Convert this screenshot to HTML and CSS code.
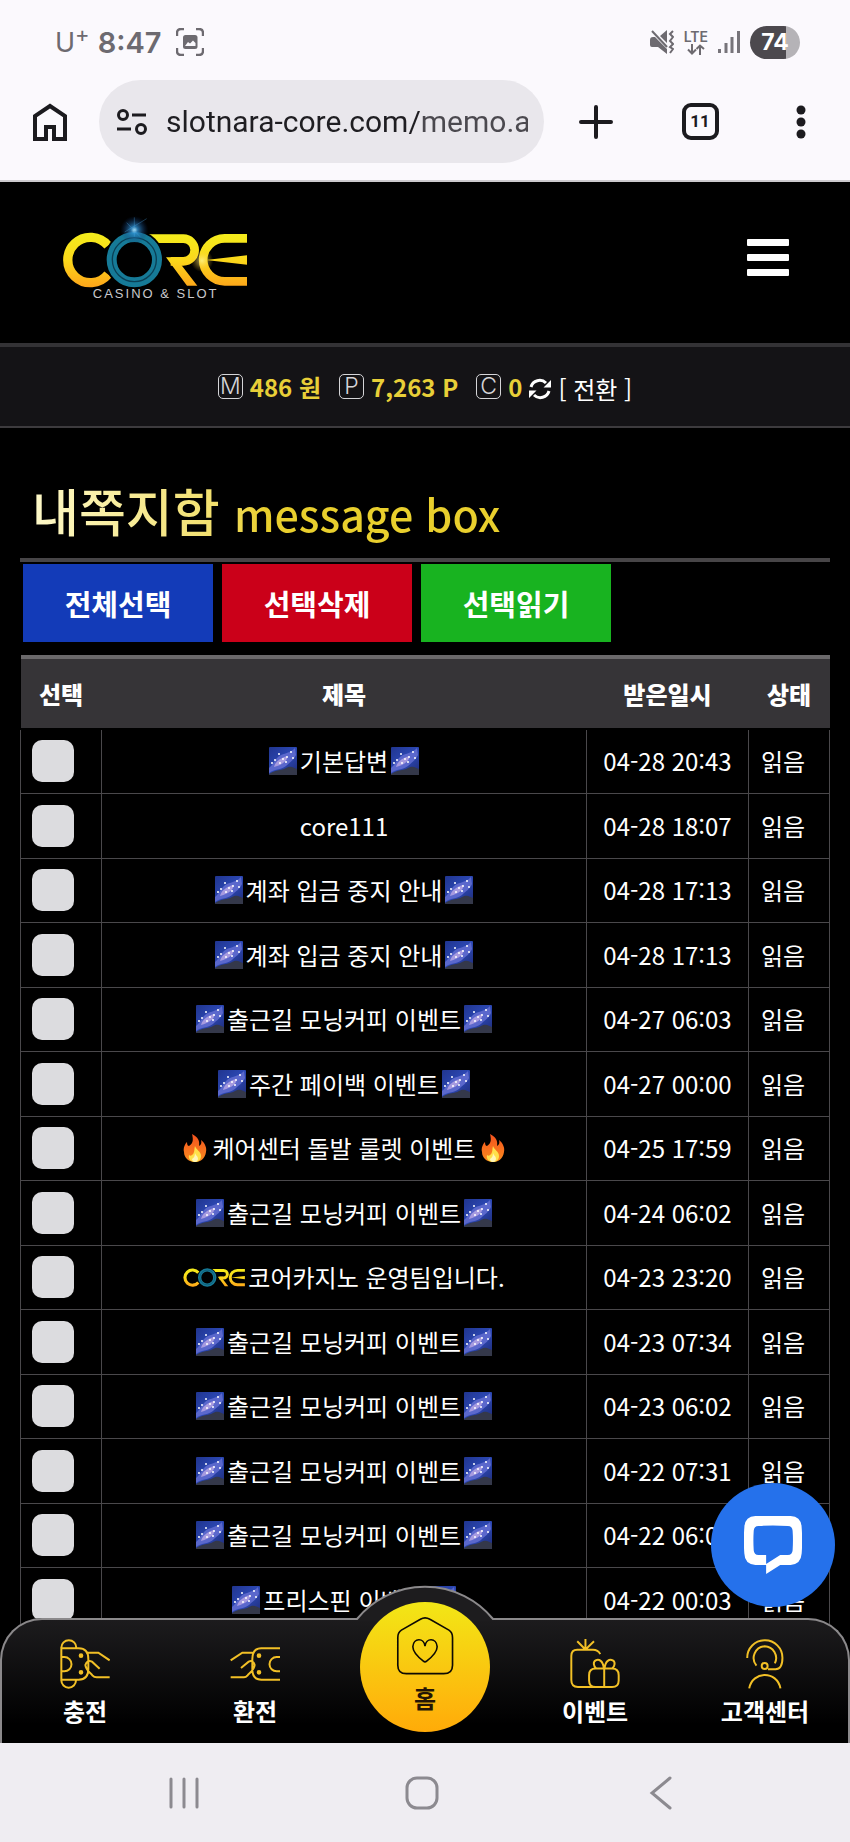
FILE: index.html
```html
<!DOCTYPE html>
<html lang="ko">
<head>
<meta charset="utf-8">
<meta name="viewport" content="width=device-width, initial-scale=1">
<title>내쪽지함</title>
<link rel="stylesheet" href="styles.css">
</head>
<body>
<svg class="defs" aria-hidden="true">
  <defs>
    <linearGradient id="gold" x1="0" y1="150" x2="0" y2="318" gradientUnits="userSpaceOnUse">
      <stop offset="0" stop-color="#f3ee1c"/><stop offset=".5" stop-color="#fbd91a"/><stop offset="1" stop-color="#fda51a"/>
    </linearGradient>
    <radialGradient id="flare"><stop offset="0" stop-color="#b9ecff"/><stop offset=".25" stop-color="#2f8fd0" stop-opacity=".8"/><stop offset="1" stop-color="#0a2a66" stop-opacity="0"/></radialGradient>
    <radialGradient id="glow"><stop offset="0" stop-color="#fff7a0"/><stop offset="1" stop-color="#fbc21a" stop-opacity="0"/></radialGradient>
    <linearGradient id="night" x1="0" y1="0" x2="1" y2="1"><stop offset="0" stop-color="#20358f"/><stop offset=".5" stop-color="#2c48b4"/><stop offset="1" stop-color="#1f2c78"/></linearGradient>
    <linearGradient id="fire" x1="0" y1="0" x2="0" y2="1"><stop offset="0" stop-color="#f4511e"/><stop offset="1" stop-color="#fb8c1e"/></linearGradient>
  </defs>
  <symbol id="core-mark" viewBox="186 150 556 170">
    <path d="M324 193A68 68 0 1 0 324 279" fill="none" stroke="url(#gold)" stroke-width="28"/>
    <path d="M446 172H550A33 33 0 0 1 550 240H512" fill="none" stroke="url(#gold)" stroke-width="26"/>
    <path d="M498 228H545L540 246L592 313H561Z" fill="url(#gold)"/>
    <path d="M741 171H674A64 64 0 0 0 674 300H741" fill="none" stroke="url(#gold)" stroke-width="26"/>
    <path d="M618 236L741 222V250Z" fill="url(#gold)"/>
    <circle cx="403" cy="235" r="89" fill="#000"/>
    <circle cx="403" cy="235" r="68" fill="none" stroke="#167a97" stroke-width="30"/>
    <circle cx="403" cy="235" r="66" fill="none" stroke="#0a3f55" stroke-width="4"/>
  </symbol>
  <symbol id="galaxy" viewBox="0 0 28 28">
    <rect width="28" height="28" rx="1" fill="url(#night)"/>
    <path d="M0 21C5 17 6 11 12 8C17 6 23 5 26 1L27 8C25 13 21 15 17 19C12 23 5 22 0 26Z" fill="#5b68cc"/>
    <path d="M5 20C6 15 11 11 18 9C20 12 14 18 5 20Z" fill="#a79be0"/>
    <path d="M0 27C7 22 12 24 17 21C22 18 25 21 28 22V28H0Z" fill="#34384a"/>
    <g fill="#fff"><circle cx="10" cy="7" r="1"/><circle cx="14" cy="12" r="1"/><circle cx="22" cy="5" r="1"/><circle cx="17" cy="15" r="1"/><circle cx="6" cy="13" r="1"/><circle cx="11" cy="16" r="1"/><circle cx="24" cy="11" r="1"/><circle cx="3" cy="16" r="1"/><circle cx="18" cy="10" r="1"/></g>
  </symbol>
  <symbol id="flame" viewBox="0 0 24 28">
    <path d="M9 0C15 3 17 7 16 12C18 11 19 9 18 6C22 9 24 14 23 18C22 25 17 28 12 28C6 28 1 24 1 18C0 14 2 10 4 8C4 11 5 12 6 12C11 9 10 4 9 0Z" fill="url(#fire)"/>
    <path d="M12 12C13 16 18 17 18 22C18 26 15 28 12 28C8 28 5 25 6 21C7 22 8 22 9 21C12 19 11 15 12 12Z" fill="#ffe04a"/>
    <path d="M12 19C13 22 15 22 15 25C15 27 13 28 12 28C10 28 9 26 9 25C11 24 12 22 12 19Z" fill="#fff6b8"/>
  </symbol>
</svg>

<div class="screen">
  <div class="status">
    <span class="carrier">U<sup>+</sup></span>
    <span class="clock">8:47</span>
    <svg class="shot" viewBox="0 0 28 28" aria-hidden="true"><path d="M1 8V5Q1 1 5 1H8M20 1h3q4 0 4 4v3M27 20v3q0 4-4 4h-3M8 27H5Q1 27 1 23V20" fill="none" stroke="#6d6a70" stroke-width="2.4"/><rect x="7" y="7" width="14.500" height="14" rx="2.500" fill="#6d6a70"/><path d="M9 18L12 14L14 15.500L17 12.500L19.500 15V18Z" fill="#fbf9fd"/></svg>
    <div class="status-right">
      <svg class="mute" viewBox="0 0 24 24" aria-hidden="true"><path d="M0 10Q0 7 3 7H5L17 19V24L8 17H2Q0 17 0 15ZM10 6L17 0V13Z" fill="#6d6a70"/><path d="M2 1L17 17" stroke="#6d6a70" stroke-width="2"/><path d="M23 1l-3 3 3 3-3 4 3 3-3 3 3 2-3 4" fill="none" stroke="#6d6a70" stroke-width="2"/></svg>
      <span class="lte">LTE<svg viewBox="0 0 18 11" aria-hidden="true"><path d="M5 0V9M1 5.500L5 9.500L9 5.500M13 11V2M9.500 5L13 1.500L17 5" fill="none" stroke="#6d6a70" stroke-width="2"/></svg></span>
      <svg class="bars" viewBox="0 0 22 24" aria-hidden="true"><path d="M1.500 19V23M8 13V23M14 7V23M20.500 1V23" stroke="#77747a" stroke-width="3"/></svg>
      <span class="battery">74</span>
    </div>
  </div>

  <div class="browser">
    <button class="tool home" aria-label="홈페이지"><svg width="36" height="38" viewBox="0 0 36 38"><path d="M3 36V13L18 3L33 13V36H22V24H14V36Z" fill="none" stroke="#1c1b1f" stroke-width="4"/></svg></button>
    <div class="address">
      <svg width="32" height="28" viewBox="0 0 32 28" aria-hidden="true"><g fill="none" stroke="#1c1b1f" stroke-width="3"><circle cx="7" cy="7" r="4.500"/><path d="M16 7H30M1 21H15"/><circle cx="25" cy="21" r="4.500"/></g></svg>
      <input class="url" type="text" aria-label="주소" value="slotnara-core.com/memo.asp">
    </div>
    <button class="tool" aria-label="새 탭"><svg width="34" height="34" viewBox="0 0 34 34"><path d="M17 2V32M2 17H32" stroke="#1c1b1f" stroke-width="4" stroke-linecap="round"/></svg></button>
    <button class="tool" aria-label="탭 11개"><span class="tabs">11</span></button>
    <button class="tool more" aria-label="더보기"><svg width="10" height="34" viewBox="0 0 10 34" fill="#1c1b1f"><circle cx="5" cy="5" r="4.500"/><circle cx="5" cy="17" r="4.500"/><circle cx="5" cy="29" r="4.500"/></svg></button>
  </div>

  <div class="site">
    <header class="top">
      <a class="logo" href="#" aria-label="CORE">
        <svg width="190" height="88" viewBox="180 98 570 264">
          <use href="#core-mark" x="186" y="150" width="556" height="170"/>
          <circle cx="403" cy="146" r="42" fill="url(#flare)"/>
          <path d="M403 108V166M374 152L440 112M380 124L420 166" stroke="#4aa8e6" stroke-width="2" opacity=".5"/>
          <circle cx="606" cy="238" r="34" fill="url(#glow)" opacity=".7"/>
          <text class="tagline" x="467" y="350" text-anchor="middle">CASINO &amp; SLOT</text>
        </svg>
      </a>
      <button class="menu" aria-label="메뉴"><span></span><span></span><span></span></button>
    </header>

    <div class="wallet">
      <div class="coin"><span class="badge">M</span><b>486 원</b></div>
      <div class="coin"><span class="badge">P</span><b>7,263 P</b></div>
      <div class="coin"><span class="badge">C</span><b>0</b>
        <button class="swap"><svg width="22" height="22" viewBox="0 0 22 22" aria-hidden="true"><path d="M2 9A9 9 0 0 1 17 5M20 13A9 9 0 0 1 5 17" fill="none" stroke="#fff" stroke-width="3"/><path d="M22 2V9.500H14.500ZM0 20V12.500H7.500Z" fill="#fff"/></svg>[ 전환 ]</button>
      </div>
    </div>

    <main class="box">
      <h1>내쪽지함 <small>message box</small></h1>
      <div class="actions">
        <button class="act blue">전체선택</button>
        <button class="act red">선택삭제</button>
        <button class="act green">선택읽기</button>
      </div>
      <table>
        <colgroup><col class="c-pick"><col><col class="c-date"><col class="c-state"></colgroup>
        <thead><tr><th>선택</th><th>제목</th><th>받은일시</th><th>상태</th></tr></thead>
        <tbody>
          <tr><td><input type="checkbox" aria-label="기본답변"></td><td><a href="#"><svg class="emo"><use href="#galaxy"/></svg>기본답변<svg class="emo"><use href="#galaxy"/></svg></a></td><td>04-28 20:43</td><td>읽음</td></tr>
          <tr><td><input type="checkbox" aria-label="core111"></td><td><a href="#">core111</a></td><td>04-28 18:07</td><td>읽음</td></tr>
          <tr><td><input type="checkbox" aria-label="계좌 입금 중지 안내"></td><td><a href="#"><svg class="emo"><use href="#galaxy"/></svg>계좌 입금 중지 안내<svg class="emo"><use href="#galaxy"/></svg></a></td><td>04-28 17:13</td><td>읽음</td></tr>
          <tr><td><input type="checkbox" aria-label="계좌 입금 중지 안내"></td><td><a href="#"><svg class="emo"><use href="#galaxy"/></svg>계좌 입금 중지 안내<svg class="emo"><use href="#galaxy"/></svg></a></td><td>04-28 17:13</td><td>읽음</td></tr>
          <tr><td><input type="checkbox" aria-label="출근길 모닝커피 이벤트"></td><td><a href="#"><svg class="emo"><use href="#galaxy"/></svg>출근길 모닝커피 이벤트<svg class="emo"><use href="#galaxy"/></svg></a></td><td>04-27 06:03</td><td>읽음</td></tr>
          <tr><td><input type="checkbox" aria-label="주간 페이백 이벤트"></td><td><a href="#"><svg class="emo"><use href="#galaxy"/></svg>주간 페이백 이벤트<svg class="emo"><use href="#galaxy"/></svg></a></td><td>04-27 00:00</td><td>읽음</td></tr>
          <tr><td><input type="checkbox" aria-label="케어센터 돌발 룰렛 이벤트"></td><td><a href="#"><svg class="emo"><use href="#flame"/></svg>케어센터 돌발 룰렛 이벤트<svg class="emo"><use href="#flame"/></svg></a></td><td>04-25 17:59</td><td>읽음</td></tr>
          <tr><td><input type="checkbox" aria-label="출근길 모닝커피 이벤트"></td><td><a href="#"><svg class="emo"><use href="#galaxy"/></svg>출근길 모닝커피 이벤트<svg class="emo"><use href="#galaxy"/></svg></a></td><td>04-24 06:02</td><td>읽음</td></tr>
          <tr><td><input type="checkbox" aria-label="코어카지노 운영팀입니다."></td><td><a href="#"><svg class="mini"><use href="#core-mark"/></svg>코어카지노 운영팀입니다.</a></td><td>04-23 23:20</td><td>읽음</td></tr>
          <tr><td><input type="checkbox" aria-label="출근길 모닝커피 이벤트"></td><td><a href="#"><svg class="emo"><use href="#galaxy"/></svg>출근길 모닝커피 이벤트<svg class="emo"><use href="#galaxy"/></svg></a></td><td>04-23 07:34</td><td>읽음</td></tr>
          <tr><td><input type="checkbox" aria-label="출근길 모닝커피 이벤트"></td><td><a href="#"><svg class="emo"><use href="#galaxy"/></svg>출근길 모닝커피 이벤트<svg class="emo"><use href="#galaxy"/></svg></a></td><td>04-23 06:02</td><td>읽음</td></tr>
          <tr><td><input type="checkbox" aria-label="출근길 모닝커피 이벤트"></td><td><a href="#"><svg class="emo"><use href="#galaxy"/></svg>출근길 모닝커피 이벤트<svg class="emo"><use href="#galaxy"/></svg></a></td><td>04-22 07:31</td><td>읽음</td></tr>
          <tr><td><input type="checkbox" aria-label="출근길 모닝커피 이벤트"></td><td><a href="#"><svg class="emo"><use href="#galaxy"/></svg>출근길 모닝커피 이벤트<svg class="emo"><use href="#galaxy"/></svg></a></td><td>04-22 06:02</td><td>읽음</td></tr>
          <tr><td><input type="checkbox" aria-label="프리스핀 이벤트"></td><td><a href="#"><svg class="emo"><use href="#galaxy"/></svg>프리스핀 이벤트<svg class="emo"><use href="#galaxy"/></svg></a></td><td>04-22 00:03</td><td>읽음</td></tr>
        </tbody>
      </table>
    </main>

    <button class="chat" aria-label="채팅 상담"><svg width="58" height="58" viewBox="582 175 173 173"><path fill="#fff" fill-rule="evenodd" d="M616 175Q668 171 721 175Q753 177 754 209Q757 248 754 287Q752 319 721 321H690L648 348V321H616Q584 319 583 287Q580 248 583 209Q584 177 616 175ZM625 205Q612 205 611 219Q609 248 611 277Q612 291 625 291H648V318L690 291H713Q726 291 727 277Q729 248 727 219Q726 205 713 205Q668 202 625 205Z"/></svg></button>

    <nav class="dock">
      <svg class="hump" viewBox="0 0 140 36" aria-hidden="true"><path d="M0 36L2 34A88 88 0 0 1 138 34L140 36Z" fill="#1d1c1e"/><path d="M0 34H2A88 88 0 0 1 138 34H140" fill="none" stroke="#8b898b" stroke-width="2"/></svg>
      <a class="dock-item" href="#"><svg viewBox="180 238 150 150"><path d="M184 264A22 22 0 0 1 229 264M184 262V364M184 266H236Q265 266 265 298V328Q265 360 236 360H184M184 362A22 22 0 0 0 228 362M184 292H193A21 21 0 0 1 193 335H184M262 279H295L329 302M299 327L276 306Q262 300 256 316C258 335 272 338 278 348Q282 353 290 353H329"/><circle class="dot" cx="243" cy="288" r="4"/><circle class="dot" cx="243" cy="338" r="4"/></svg>충전</a>
      <a class="dock-item" href="#"><svg viewBox="690 238 150 150"><path d="M840 266H784Q757 266 757 298V328Q757 360 784 360H840M840 292H830A21 21 0 0 0 830 335H840M758 279H727L692 302M723 325L746 306Q760 300 764 316C762 335 748 338 742 348Q738 353 732 353H692"/><circle class="dot" cx="777" cy="288" r="4"/><circle class="dot" cx="777" cy="338" r="4"/></svg>환전</a>
      <a class="dock-home" href="#"><svg viewBox="287 170 176 180"><path d="M361 180L303 213Q292 220 292 236V320Q292 346 318 346H432Q459 346 459 320V236Q459 220 448 213L390 180Q375 171 361 180ZM375 262C372 235 340 237 338 263C337 280 360 300 370 308Q375 312 380 308C390 300 413 280 412 263C410 237 378 235 375 262Z"/></svg>홈</a>
      <a class="dock-item" href="#"><svg viewBox="60 540 152 152"><path d="M152 586Q145 573 130 573H82Q64 573 64 592V665Q64 686 84 686H140M107 540V572M82 547L106 571M133 547L108 571M138 630H188Q208 630 208 650V666Q208 686 188 686H138Q118 686 118 666V650Q118 630 138 630ZM164 628V686M163 629C160 606 148 600 138 605C129 610 132 622 139 629M165 629C168 606 180 600 190 605C199 610 196 622 189 629"/></svg>이벤트</a>
      <a class="dock-item" href="#"><svg viewBox="570 538 152 152"><path d="M592 596A53 53 0 0 1 645 542A53 53 0 0 1 699 596C699 620 690 630 678 630H655M620 619A36 36 0 0 1 645 560A36 36 0 0 1 676 612M598 688C608 634 683 634 693 688"/><circle cx="645" cy="620" r="9"/></svg>고객센터</a>
    </nav>
  </div>

  <div class="system">
    <button aria-label="최근 앱"><svg width="32" height="34" viewBox="0 0 32 34"><path d="M3 3V31M16 3V31M29 3V31"/></svg></button>
    <button aria-label="홈"><svg width="34" height="34" viewBox="0 0 34 34"><rect x="2" y="2" width="30" height="30" rx="10"/></svg></button>
    <button aria-label="뒤로"><svg width="24" height="34" viewBox="0 0 24 34"><path d="M21 2L3 17L21 32"/></svg></button>
  </div>
</div>
</body>
</html>
```
FILE: styles.css
```css
* { box-sizing: border-box; }

body {
  margin: 0;
  background: #000;
  color: #fff;
  font-family: "Noto Sans CJK KR", "Noto Sans", sans-serif;
  font-size: 24px;
}

button {
  padding: 0;
  border: 0;
  background: none;
  color: inherit;
  font: inherit;
}

a { color: inherit; text-decoration: none; }
svg { display: block; }
.defs { position: absolute; width: 0; height: 0; }

.screen { display: flex; flex-direction: column; height: 100vh; }

/* phone status bar */
.status {
  display: flex;
  align-items: center;
  height: 80px;
  padding: 4px 50px 0 55px;
  background: #fbf9fd;
  color: #6d6a70;
  font-family: Inter, sans-serif;
}
.carrier { font-size: 27px; font-weight: 400; }
.carrier sup { font-size: 22px; line-height: 0; }
.clock { margin: 0 14px 0 8px; font-size: 29px; font-weight: 600; }
.shot { width: 28px; height: 28px; }
.status-right { display: flex; align-items: center; gap: 10px; margin-left: auto; }
.mute { width: 24px; height: 24px; }
.lte { display: grid; justify-items: center; font-size: 14px; line-height: 14px; font-weight: 600; }
.lte svg { width: 18px; height: 11px; }
.bars { width: 22px; height: 24px; }
.battery {
  width: 50px;
  border-radius: 17px;
  background: linear-gradient(to right, #4c494e 72%, #b5b3b7 72%);
  color: #fff;
  font-size: 23px;
  line-height: 33px;
  font-weight: 700;
  text-align: center;
}

/* browser toolbar */
.browser {
  display: flex;
  align-items: flex-start;
  height: 102px;
  border-bottom: 2px solid #cccace;
  background: #fbf9fd;
}
.tool { display: grid; place-items: center; width: 104px; height: 83px; }
.tool.home { width: 99px; }
.tool.more { width: 98px; }
.address {
  display: flex;
  flex: 1;
  align-items: center;
  gap: 18px;
  min-width: 0;
  height: 83px;
  padding: 0 16px 0 17px;
  border-radius: 42px;
  background: #e9e7ec;
}
.address svg { flex: none; }
.url {
  flex: 1;
  min-width: 0;
  padding: 0;
  border: 0;
  background: linear-gradient(to right, #1f1e22 256px, #4b494f 256px);
  background-clip: text;
  -webkit-background-clip: text;
  color: transparent;
  font: 30px/44px Roboto, sans-serif;
}
.tabs {
  width: 37px;
  border: 4px solid #1c1b1f;
  border-radius: 9px;
  color: #1c1b1f;
  font: 700 17px/29px Roboto, sans-serif;
}

/* site */
.site { position: relative; flex: 1; min-height: 0; overflow: hidden; }
.top {
  display: flex;
  align-items: center;
  justify-content: space-between;
  height: 161px;
  padding: 0 61px 10px 60px;
}
.tagline { fill: #c9c9cc; font: 39px "Liberation Sans", sans-serif; letter-spacing: 6px; }
.menu { display: grid; gap: 8px; width: 42px; }
.menu span { height: 7px; border-radius: 1px; background: #fff; }

.wallet {
  display: flex;
  align-items: center;
  justify-content: center;
  gap: 18px;
  height: 85px;
  border-top: 4px solid #333235;
  border-bottom: 2px solid #3d3b3e;
  background: #141316;
}
.coin { display: flex; align-items: center; gap: 7px; color: #e8cf38; line-height: 36px; }
.badge {
  width: 25px;
  border: 1px solid #d5d5d8;
  border-radius: 5px;
  color: #d5d5d8;
  font: 300 23px/23px Inter, sans-serif;
  text-align: center;
}
.swap { display: flex; align-items: center; gap: 7px; padding-top: 4px; color: #fff; line-height: 36px; }

.box { padding: 0 20px; }
h1 {
  width: fit-content;
  margin: 0;
  padding: 46px 12px 9px;
  background: linear-gradient(to right, #fffbd0, #f2df6c 40%, #e9cf2d 50%);
  background-clip: text;
  -webkit-background-clip: text;
  color: transparent;
  font-size: 51px;
  line-height: 72px;
  font-weight: 500;
}
h1 small { font-size: 43px; font-weight: 500; }
.actions {
  display: flex;
  gap: 9px;
  padding: 2px 3px 13px;
  border-top: 4px solid #474547;
}
.act { width: 190px; height: 78px; font-size: 29px; font-weight: 700; }
.blue { background: #133bb8; }
.red { background: #cb0019; }
.green { background: #18b320; }

table { width: 100%; border-collapse: collapse; table-layout: fixed; }
.c-pick, .c-state { width: 81px; }
.c-date { width: 162px; }
th {
  height: 72px;
  padding: 0;
  border-top: 4px solid #6b696b;
  background: #363437;
  font-weight: 900;
  line-height: 36px;
}
td {
  height: 64px;
  padding: 0;
  border: 1px solid #4a484b;
  line-height: 36px;
  text-align: center;
}
tbody tr:nth-child(even) td { height: 65px; }
tbody tr:first-child td { border-top: 2px solid #000; }
td:first-child { padding-left: 11px; }
td:last-child { padding-left: 12px; text-align: left; }
td input {
  display: block;
  width: 42px;
  height: 42px;
  margin: 0;
  border-radius: 10px;
  background: #dcdcdf;
  appearance: none;
}
td a { display: flex; align-items: center; justify-content: center; gap: 3px; }
.emo { width: 28px; height: 28px; }
.mini { width: 62px; height: 19px; }

.chat {
  position: absolute;
  right: 15px;
  bottom: 136px;
  display: grid;
  place-items: center;
  width: 124px;
  height: 124px;
  border-radius: 50%;
  background: #2571eb;
}

.dock {
  position: absolute;
  right: 0;
  bottom: 0;
  left: 0;
  display: grid;
  grid-template-columns: repeat(5, 1fr);
  height: 125px;
  border-radius: 42px 42px 0 0;
  background: linear-gradient(#1d1c1e, #000 85%);
  font-weight: 700;
}
.dock::before {
  content: "";
  position: absolute;
  inset: 0;
  border: 2px solid #8b898b;
  border-bottom: 0;
  border-radius: 42px 42px 0 0;
}
.hump { position: absolute; top: -33px; left: 50%; width: 140px; height: 36px; margin-left: -70px; }
.dock-item {
  display: flex;
  flex-direction: column;
  align-items: center;
  gap: 4px;
  padding-top: 21px;
  line-height: 36px;
}
.dock-item svg { width: 50px; height: 50px; fill: none; stroke: #f2c026; stroke-width: 6; }
.dock-item .dot { fill: #f2c026; }
.dock-home {
  z-index: 1;
  display: flex;
  flex-direction: column;
  align-items: center;
  gap: 5px;
  justify-self: center;
  width: 130px;
  height: 130px;
  margin-top: -16px;
  padding-top: 14px;
  border-radius: 50%;
  background: linear-gradient(#f2e716, #fdb90d 75%, #ffab08);
  color: #241405;
  line-height: 36px;
}
.dock-home svg { width: 58px; height: 59px; fill: none; stroke: #0d0a04; stroke-width: 5; }

/* phone navigation */
.system {
  display: grid;
  grid-template-columns: repeat(3, 1fr);
  height: 99px;
  padding: 0 70px 0 65px;
  background: #efedf2;
}
.system button { display: grid; place-items: center; }
.system svg { fill: none; stroke: #8c8a90; stroke-width: 3; stroke-linecap: round; }
```
